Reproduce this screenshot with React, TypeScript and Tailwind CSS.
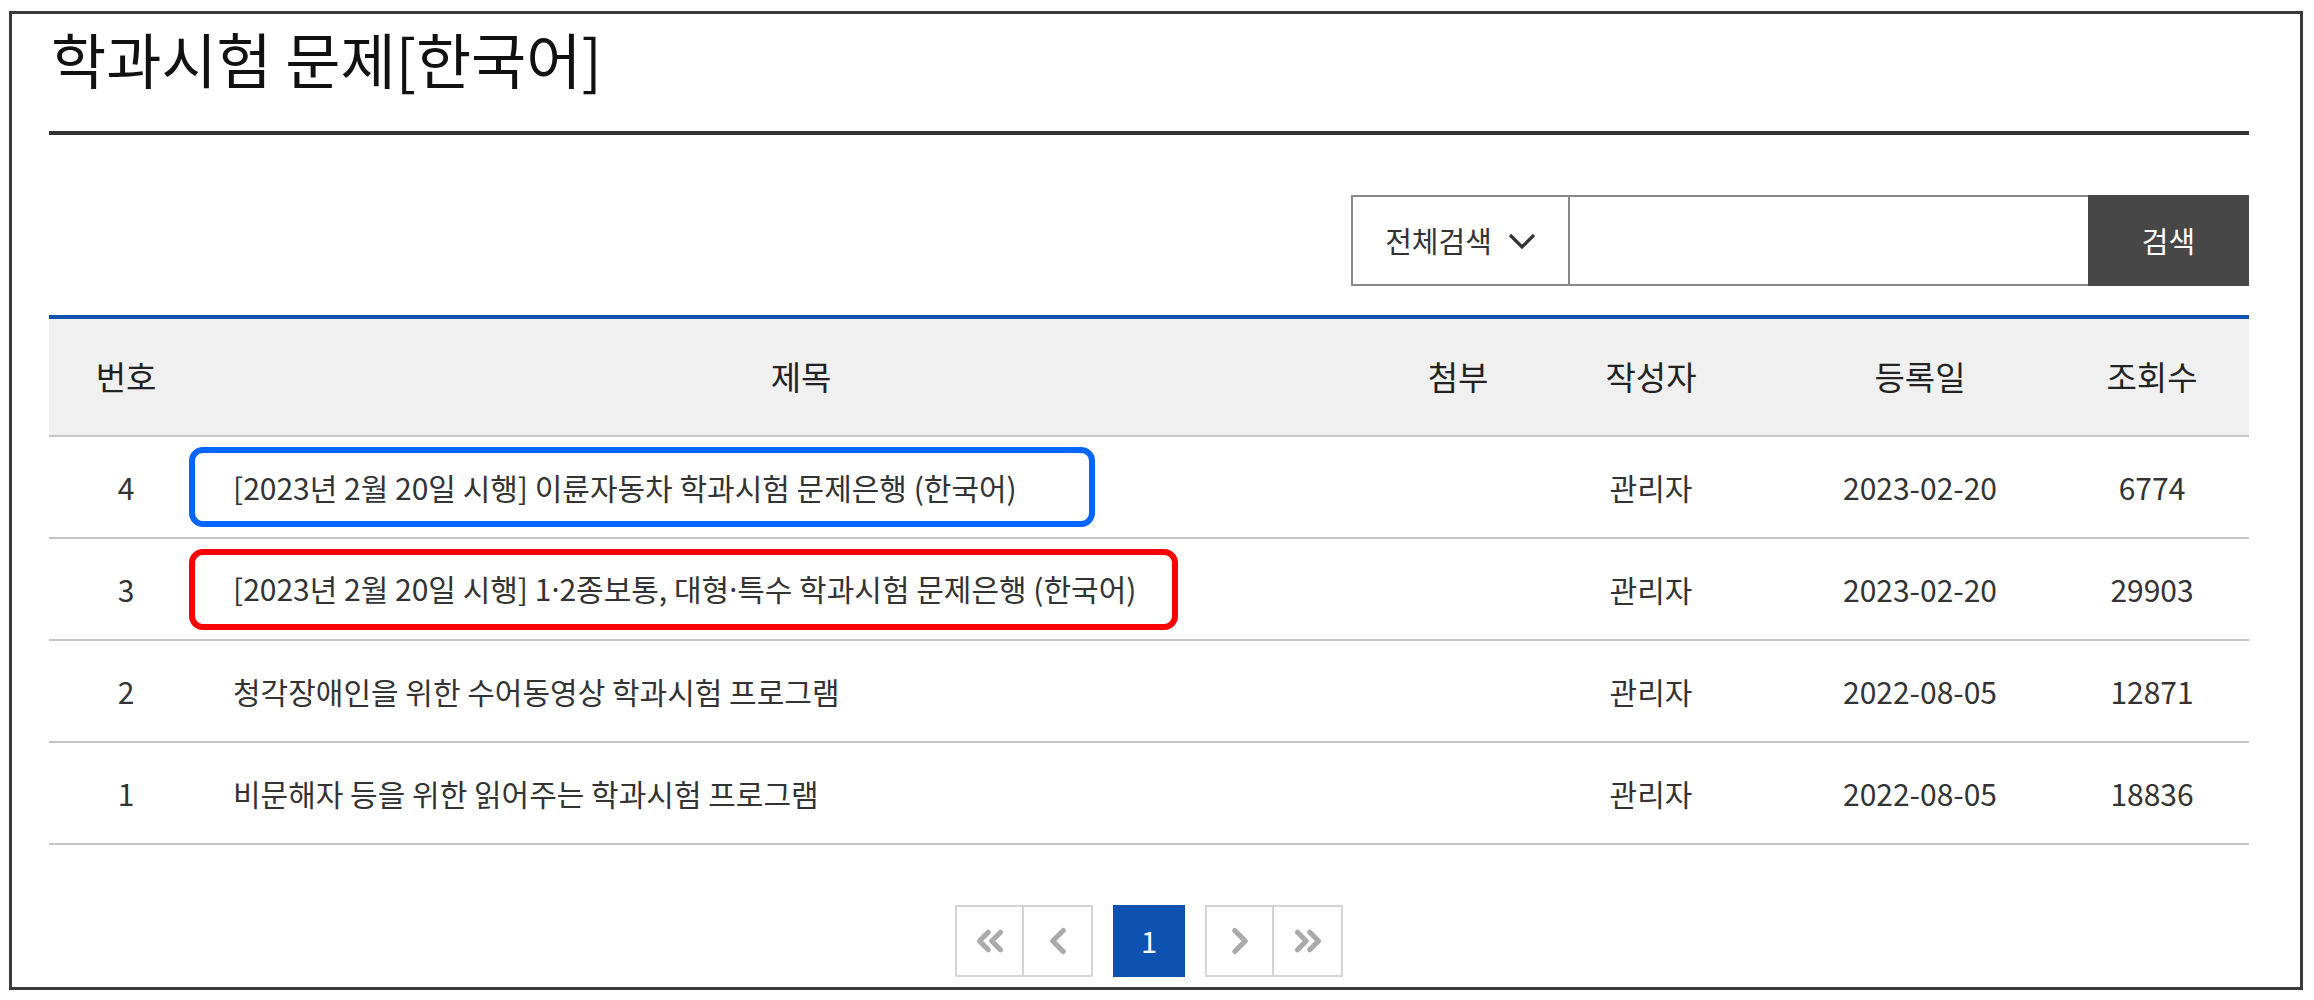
import { ChevronLeft, ChevronRight, ChevronsLeft, ChevronsRight } from "lucide-react";
import { Fragment } from "react";

const rows = [
  {
    no: 4,
    title: "[2023년 2월 20일 시행] 이륜자동차 학과시험 문제은행 (한국어)",
    writer: "관리자",
    date: "2023-02-20",
    views: "6774",
    mark: "blue",
  },
  {
    no: 3,
    title: "[2023년 2월 20일 시행] 1·2종보통, 대형·특수 학과시험 문제은행 (한국어)",
    writer: "관리자",
    date: "2023-02-20",
    views: "29903",
    mark: "red",
  },
  {
    no: 2,
    title: "청각장애인을 위한 수어동영상 학과시험 프로그램",
    writer: "관리자",
    date: "2022-08-05",
    views: "12871",
    mark: "",
  },
  {
    no: 1,
    title: "비문해자 등을 위한 읽어주는 학과시험 프로그램",
    writer: "관리자",
    date: "2022-08-05",
    views: "18836",
    mark: "",
  },
];

const cols = "grid grid-cols-[154px_1196px_118px_268px_270px_194px]";

// middle dots in the CJK font are full width, the original is narrow
function Title({ text }: { text: string }) {
  const parts = text.split("·");
  return (
    <span>
      {parts.map((p, i) => (
        <Fragment key={i}>
          {i > 0 && <span className="font-['Noto_Sans',sans-serif]">·</span>}
          {p}
        </Fragment>
      ))}
    </span>
  );
}

export default function App() {
  return (
    <div className="min-h-screen bg-white pt-[11px] pl-[9px] pr-[11px] font-['Noto_Sans_CJK_KR','Noto_Sans',sans-serif]">
      <div className="border-[3px] border-[#3a3a3a] pl-[37px] pr-[51px] pb-[10px]">
        <div className="h-[121px] pt-[8px] border-b-4 border-[#333]">
          <h1 className="text-[60px] leading-[1.2] text-[#111] pl-[2px]">학과시험 문제[한국어]</h1>
        </div>

        <div className="flex justify-end mt-[60px]">
          <div className="flex h-[91px] border-2 border-[#888] border-r-0">
            <div className="w-[217px] flex items-center justify-center gap-[16px] border-r-2 border-[#888] text-[29px] text-[#333]">
              <span>전체검색</span>
              <svg width="28" height="17" viewBox="0 0 28 17" fill="none" className="mt-[2px]">
                <polyline points="2,2 14,14 26,2" stroke="#333" strokeWidth="3.2" />
              </svg>
            </div>
            <input type="text" className="w-[518px] outline-none px-4 text-[28px]" />
          </div>
          <button className="w-[161px] h-[91px] bg-[#474747] text-white text-[29px]">검색</button>
        </div>

        <div className="mt-[29px]">
          <div className={`${cols} h-[122px] bg-[#f0f0f0] border-t-4 border-[#0d52b0] border-b-2 border-b-[#c4c4c4] items-center text-center text-[33px] text-[#222]`}>
            <div>번호</div>
            <div>제목</div>
            <div>첨부</div>
            <div>작성자</div>
            <div>등록일</div>
            <div>조회수</div>
          </div>
          {rows.map((r) => (
            <div
              key={r.no}
              className={`${cols} h-[102px] border-b-2 border-[#c4c4c4] items-center text-center text-[30px] text-[#333]`}
            >
              <div>{r.no}</div>
              <div className="relative h-full flex items-center pl-[30px] text-left">
                <Title text={r.title} />
                {r.mark === "blue" && (
                  <span className="absolute left-[-14px] top-[10px] w-[906px] h-[80px] border-[6px] border-[#0066ff] rounded-[14px]" />
                )}
                {r.mark === "red" && (
                  <span className="absolute left-[-14px] top-[10px] w-[989px] h-[81px] border-[6px] border-[#ff0000] rounded-[14px]" />
                )}
              </div>
              <div></div>
              <div>{r.writer}</div>
              <div>{r.date}</div>
              <div>{r.views}</div>
            </div>
          ))}
        </div>

        <div className="flex justify-center items-center gap-[20px] mt-[60px]">
          <div className="flex">
            <div className="w-[69px] h-[72px] border-2 border-[#d4d4d4] flex items-center justify-center">
              <ChevronsLeft className="w-[42px] h-[42px] text-[#aaa]" strokeWidth={3} />
            </div>
            <div className="w-[69px] h-[72px] border-2 border-l-0 border-[#d4d4d4] flex items-center justify-center">
              <ChevronLeft className="w-[42px] h-[42px] text-[#aaa]" strokeWidth={3} />
            </div>
          </div>
          <div className="w-[72px] h-[72px] bg-[#0d52b0] text-white text-[29px] flex items-center justify-center">1</div>
          <div className="flex">
            <div className="w-[69px] h-[72px] border-2 border-[#d4d4d4] flex items-center justify-center">
              <ChevronRight className="w-[42px] h-[42px] text-[#aaa]" strokeWidth={3} />
            </div>
            <div className="w-[69px] h-[72px] border-2 border-l-0 border-[#d4d4d4] flex items-center justify-center">
              <ChevronsRight className="w-[42px] h-[42px] text-[#aaa]" strokeWidth={3} />
            </div>
          </div>
        </div>
      </div>
    </div>
  );
}
